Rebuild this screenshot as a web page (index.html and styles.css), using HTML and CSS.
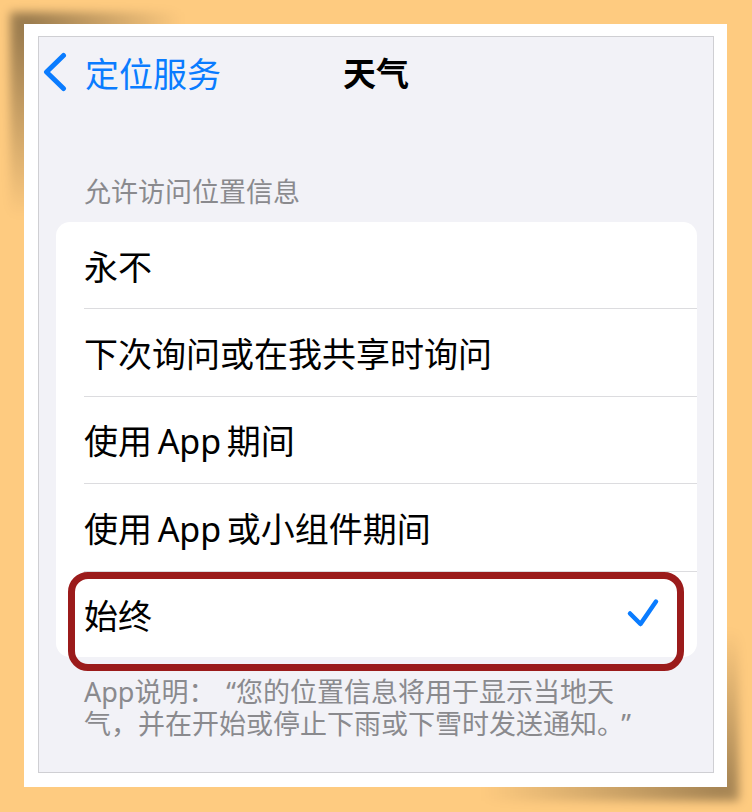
FILE: index.html
```html
<!DOCTYPE html>
<html lang="zh-CN">
<head>
  <meta charset="UTF-8">
  <title>天气</title>
  <link rel="stylesheet" href="styles.css">
</head>
<body>

  <div class="frame">
    <div class="screen">

      <div class="navbar">
        <div class="back">
          <svg class="chevron" width="26" height="40" viewBox="0 0 26 40">
            <path d="M21.5 3.5 L4.5 20 L21.5 36.5" fill="none" stroke="#0a7cff" stroke-width="5" stroke-linecap="round" stroke-linejoin="round"/>
          </svg>
          <span>定位服务</span>
        </div>
        <div class="title">天气</div>
        <div></div>
      </div>

      <div class="section-label">允许访问位置信息</div>

      <div class="list">
        <div class="row">永不</div>
        <div class="row">下次询问或在我共享时询问</div>
        <div class="row">使用&thinsp;App&thinsp;期间</div>
        <div class="row">使用&thinsp;App&thinsp;或小组件期间</div>
        <div class="row selected">
          <span>始终</span>
          <svg class="check" width="34" height="32" viewBox="0 0 34 32">
            <path d="M4 15.5 L14.5 26 L30 3.5" fill="none" stroke="#0a7cff" stroke-width="4.5" stroke-linecap="round" stroke-linejoin="round"/>
          </svg>
          <div class="highlight"></div>
        </div>
      </div>

      <div class="footnote">
        <div class="line">App说明：<span class="quote-open">“</span>您的位置信息将用于显示当地天</div>
        <div class="line">气，并在开始或停止下雨或下雪时发送通知。<span class="quote-close">”</span></div>
      </div>

    </div>
  </div>

</body>
</html>
```

FILE: styles.css
```css
* {
  box-sizing: border-box;
}

body {
  margin: 0;
  width: 752px;
  height: 812px;
  background: #fecb80;
  font-family: "Noto Sans", "Noto Sans CJK SC", sans-serif;
  overflow: hidden;
}

/* white photo frame with lifted corners */
.frame {
  position: relative;
  margin: 24px 0 0 24px;
  width: 703px;
  height: 763px;
  padding: 12px 13px 14px 14px;
  background: #fff;
}

.frame::before,
.frame::after {
  content: "";
  position: absolute;
  z-index: -1;
  filter: blur(5px);
}

.frame::before {
  left: -14px;
  top: -12px;
  width: 200px;
  height: 240px;
  background: radial-gradient(ellipse at 8% 6%, rgba(0, 0, 0, 0.4), rgba(0, 0, 0, 0) 60%);
}

.frame::after {
  right: -12px;
  bottom: -14px;
  width: 300px;
  height: 200px;
  background: radial-gradient(ellipse at 94% 94%, rgba(0, 0, 0, 0.35), rgba(0, 0, 0, 0) 60%);
}

.screen {
  height: 100%;
  background: #f2f2f7;
  border: 1px solid #cfcfd3;
  display: flex;
  flex-direction: column;
}

.navbar {
  height: 70px;
  display: grid;
  grid-template-columns: 1fr auto 1fr;
  align-items: center;
}

.back {
  display: flex;
  align-items: center;
  gap: 17px;
  padding-left: 3px;
  color: #0a7cff;
  font-size: 34px;
}

.chevron {
  display: block;
}

.title {
  font-size: 33px;
  font-weight: 700;
  color: #000;
}

.section-label {
  margin: 67px 0 12px 45px;
  font-size: 27px;
  line-height: 36px;
  color: #8a8a8e;
}

.list {
  margin: 0 16px 0 17px;
  background: #fff;
  border-radius: 14px;
}

.row {
  position: relative;
  height: 87.4px;
  margin-left: 28px;
  padding-right: 37px;
  display: flex;
  align-items: center;
  justify-content: space-between;
  font-size: 34px;
  color: #000;
  border-bottom: 1px solid #dcdcdf;
}

.row:last-child {
  height: 85px;
  border-bottom: none;
}

.check {
  display: block;
}

.highlight {
  position: absolute;
  left: -16px;
  top: 0;
  width: 616px;
  height: 99px;
  border: 7px solid #9b1b1b;
  border-radius: 20px;
}

.footnote {
  margin: 19px 0 0 45px;
  font-size: 27px;
  color: #8a8a8e;
}

.footnote .line {
  height: 32px;
  line-height: 32px;
}

.quote-open {
  margin-left: 0.4em;
}

.quote-close {
  margin-left: 0.4em;
}
```
